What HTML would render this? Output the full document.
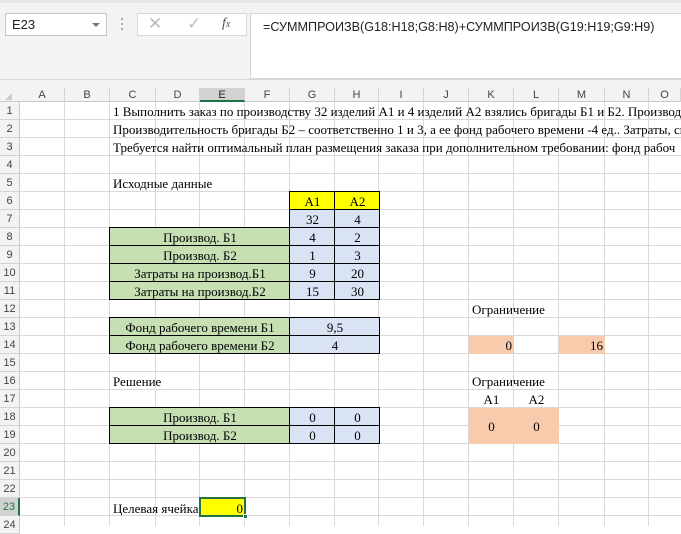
<!DOCTYPE html>
<html><head><meta charset="utf-8"><style>
*{margin:0;padding:0;box-sizing:border-box}
body{width:681px;height:526px;overflow:hidden;background:#fff;position:relative;font-family:"Liberation Serif",serif;font-size:13px;color:#000}
.a{position:absolute}
.t{position:absolute;white-space:nowrap;line-height:20px;height:18px;overflow:visible}
.c{text-align:center}
.ch{position:absolute;top:88px;height:14px;font:11px "Liberation Sans",sans-serif;color:#444;text-align:center;line-height:14px;border-right:1px solid #d4d4d4}
.rh{position:absolute;left:0;width:20px;height:18px;font:11px "Liberation Sans",sans-serif;color:#444;text-align:center;line-height:18px;background:#f3f3f3;border-bottom:1px solid #d4d4d4;border-right:1px solid #c8c8c8}
.vl{position:absolute;top:102px;bottom:0;width:1px;background:#d9d9d9}
.hl{position:absolute;left:20px;right:0;height:1px;background:#d9d9d9}
.g{background:#c6e0b4}.b{background:#dae3f3}.y{background:#ffff00}.o{background:#f8cbad}
.bx{border:1px solid #000}
.wide{overflow:hidden}
</style></head><body>
<div class="a" style="left:0;top:0;width:681px;height:88px;background:#f3f3f3"></div>
<div class="a" style="left:0;top:0;width:681px;height:3px;background:#e6e6e6"></div>
<div class="a" style="left:5px;top:13px;width:102px;height:23px;background:#fff;border:1px solid #c6c6c6;font:13px 'Liberation Sans',sans-serif;line-height:21px;padding-left:6px;color:#222">E23</div>
<div class="a" style="left:92px;top:23px;width:0;height:0;border-left:4px solid transparent;border-right:4px solid transparent;border-top:4px solid #777"></div>
<div class="a" style="left:121px;top:18px;width:2px;height:2px;background:#aaa;box-shadow:0 5px #aaa,0 10px #aaa"></div>
<div class="a" style="left:137px;top:13px;width:110px;height:23px;background:#fff;border:1px solid #d6d6d6"></div>
<div class="a" style="left:148px;top:14px;font:17px 'Liberation Sans',sans-serif;color:#bbb">✕</div>
<div class="a" style="left:187px;top:14px;font:17px 'Liberation Sans',sans-serif;color:#bbb">✓</div>
<div class="a" style="left:222px;top:16px;font:italic 14px 'Liberation Serif',serif;color:#555">f<span style="font-size:10px">x</span></div>
<div class="a" style="left:250px;top:13px;width:431px;height:66px;background:#fff;border:1px solid #d6d6d6;border-right:none;font:12.6px 'Liberation Sans',sans-serif;padding:6px 0 0 12px;color:#222;white-space:nowrap;overflow:hidden">=СУММПРОИЗВ(G18:H18;G8:H8)+СУММПРОИЗВ(G19:H19;G9:H9)</div>
<div class="a" style="left:0;top:79px;width:681px;height:1px;background:#d6d6d6"></div>
<div class="a" style="left:0;top:88px;width:681px;height:14px;background:#f3f3f3;border-bottom:1px solid #c8c8c8"></div>
<div class="a" style="left:5px;top:93px;width:0;height:0;border-left:7px solid transparent;border-bottom:7px solid #ccc"></div>
<div class="ch" style="left:20px;width:45px">A</div><div class="ch" style="left:65px;width:45px">B</div><div class="ch" style="left:110px;width:46px">C</div><div class="ch" style="left:156px;width:44px">D</div><div class="ch" style="left:200px;width:45px;background:#d2d2d2;color:#222;border-bottom:2px solid #217346">E</div><div class="ch" style="left:245px;width:45px">F</div><div class="ch" style="left:290px;width:45px">G</div><div class="ch" style="left:335px;width:44px">H</div><div class="ch" style="left:379px;width:45px">I</div><div class="ch" style="left:424px;width:45px">J</div><div class="ch" style="left:469px;width:45px">K</div><div class="ch" style="left:514px;width:45px">L</div><div class="ch" style="left:559px;width:46px">M</div><div class="ch" style="left:605px;width:44px">N</div><div class="ch" style="left:649px;width:32px">O</div>
<div class="vl" style="left:64px"></div><div class="vl" style="left:109px"></div><div class="vl" style="left:155px"></div><div class="vl" style="left:199px"></div><div class="vl" style="left:244px"></div><div class="vl" style="left:289px"></div><div class="vl" style="left:334px"></div><div class="vl" style="left:378px"></div><div class="vl" style="left:423px"></div><div class="vl" style="left:468px"></div><div class="vl" style="left:513px"></div><div class="vl" style="left:558px"></div><div class="vl" style="left:604px"></div><div class="vl" style="left:648px"></div>
<div class="hl" style="top:119px"></div><div class="hl" style="top:137px"></div><div class="hl" style="top:155px"></div><div class="hl" style="top:173px"></div><div class="hl" style="top:191px"></div><div class="hl" style="top:209px"></div><div class="hl" style="top:227px"></div><div class="hl" style="top:245px"></div><div class="hl" style="top:263px"></div><div class="hl" style="top:281px"></div><div class="hl" style="top:299px"></div><div class="hl" style="top:317px"></div><div class="hl" style="top:335px"></div><div class="hl" style="top:353px"></div><div class="hl" style="top:371px"></div><div class="hl" style="top:389px"></div><div class="hl" style="top:407px"></div><div class="hl" style="top:425px"></div><div class="hl" style="top:443px"></div><div class="hl" style="top:461px"></div><div class="hl" style="top:479px"></div><div class="hl" style="top:497px"></div><div class="hl" style="top:515px"></div>
<div class="rh" style="top:102px">1</div><div class="rh" style="top:120px">2</div><div class="rh" style="top:138px">3</div><div class="rh" style="top:156px">4</div><div class="rh" style="top:174px">5</div><div class="rh" style="top:192px">6</div><div class="rh" style="top:210px">7</div><div class="rh" style="top:228px">8</div><div class="rh" style="top:246px">9</div><div class="rh" style="top:264px">10</div><div class="rh" style="top:282px">11</div><div class="rh" style="top:300px">12</div><div class="rh" style="top:318px">13</div><div class="rh" style="top:336px">14</div><div class="rh" style="top:354px">15</div><div class="rh" style="top:372px">16</div><div class="rh" style="top:390px">17</div><div class="rh" style="top:408px">18</div><div class="rh" style="top:426px">19</div><div class="rh" style="top:444px">20</div><div class="rh" style="top:462px">21</div><div class="rh" style="top:480px">22</div><div class="rh" style="top:498px;background:#d2d2d2;color:#217346;border-right:2px solid #217346">23</div><div class="rh" style="top:516px">24</div>

<div class="t wide" style="left:113px;top:102px;width:568px">1 Выполнить заказ по производству 32 изделий А1 и 4 изделий А2 взялись бригады Б1 и Б2. Производи</div>
<div class="t wide" style="left:113px;top:120px;width:568px">Производительность бригады Б2 – соответственно 1 и 3, а ее фонд рабочего времени -4 ед.. Затраты, св</div>
<div class="t wide" style="left:113px;top:138px;width:568px">Требуется найти оптимальный план размещения заказа при дополнительном требовании: фонд рабоч</div>
<div class="t" style="left:113px;top:174px">Исходные данные</div>

<div class="a y bx" style="left:289px;top:191px;width:46px;height:19px"></div><div class="a y bx" style="left:334px;top:191px;width:46px;height:19px"></div>
<div class="t c" style="left:290px;top:192px;width:45px">А1</div><div class="t c" style="left:335px;top:192px;width:45px">А2</div>
<div class="a b bx" style="left:289px;top:209px;width:46px;height:19px"></div><div class="a b bx" style="left:334px;top:209px;width:46px;height:19px"></div>
<div class="t c" style="left:290px;top:210px;width:45px">32</div><div class="t c" style="left:335px;top:210px;width:45px">4</div>

<div class="a g bx" style="left:109px;top:227px;width:181px;height:19px"></div><div class="a b bx" style="left:289px;top:227px;width:46px;height:19px"></div><div class="a b bx" style="left:334px;top:227px;width:46px;height:19px"></div>
<div class="a g bx" style="left:109px;top:245px;width:181px;height:19px"></div><div class="a b bx" style="left:289px;top:245px;width:46px;height:19px"></div><div class="a b bx" style="left:334px;top:245px;width:46px;height:19px"></div>
<div class="a g bx" style="left:109px;top:263px;width:181px;height:19px"></div><div class="a b bx" style="left:289px;top:263px;width:46px;height:19px"></div><div class="a b bx" style="left:334px;top:263px;width:46px;height:19px"></div>
<div class="a g bx" style="left:109px;top:281px;width:181px;height:19px"></div><div class="a b bx" style="left:289px;top:281px;width:46px;height:19px"></div><div class="a b bx" style="left:334px;top:281px;width:46px;height:19px"></div>
<div class="t c" style="left:110px;top:228px;width:180px">Производ. Б1</div><div class="t c" style="left:290px;top:228px;width:45px">4</div><div class="t c" style="left:335px;top:228px;width:45px">2</div>
<div class="t c" style="left:110px;top:246px;width:180px">Производ. Б2</div><div class="t c" style="left:290px;top:246px;width:45px">1</div><div class="t c" style="left:335px;top:246px;width:45px">3</div>
<div class="t c" style="left:110px;top:264px;width:180px">Затраты на производ.Б1</div><div class="t c" style="left:290px;top:264px;width:45px">9</div><div class="t c" style="left:335px;top:264px;width:45px">20</div>
<div class="t c" style="left:110px;top:282px;width:180px">Затраты на производ.Б2</div><div class="t c" style="left:290px;top:282px;width:45px">15</div><div class="t c" style="left:335px;top:282px;width:45px">30</div>

<div class="a g bx" style="left:109px;top:317px;width:181px;height:19px"></div><div class="a b bx" style="left:289px;top:317px;width:91px;height:19px"></div>
<div class="a g bx" style="left:109px;top:335px;width:181px;height:19px"></div><div class="a b bx" style="left:289px;top:335px;width:91px;height:19px"></div>
<div class="t c" style="left:110px;top:318px;width:180px">Фонд рабочего времени Б1</div><div class="t c" style="left:290px;top:318px;width:90px">9,5</div>
<div class="t c" style="left:110px;top:336px;width:180px">Фонд рабочего времени Б2</div><div class="t c" style="left:290px;top:336px;width:90px">4</div>

<div class="t" style="left:472px;top:300px">Ограничение</div>
<div class="a o" style="left:469px;top:336px;width:45px;height:18px"></div><div class="t" style="left:469px;top:336px;width:43px;text-align:right">0</div>
<div class="a o" style="left:559px;top:336px;width:46px;height:18px"></div><div class="t" style="left:559px;top:336px;width:44px;text-align:right">16</div>

<div class="t" style="left:113px;top:372px">Решение</div>
<div class="t" style="left:472px;top:372px">Ограничение</div>
<div class="t c" style="left:469px;top:390px;width:45px">А1</div><div class="t c" style="left:514px;top:390px;width:45px">А2</div>
<div class="a o" style="left:469px;top:408px;width:90px;height:36px"></div>
<div class="t c" style="left:469px;top:417px;width:45px">0</div><div class="t c" style="left:514px;top:417px;width:45px">0</div>

<div class="a g bx" style="left:109px;top:407px;width:181px;height:19px"></div><div class="a b bx" style="left:289px;top:407px;width:46px;height:19px"></div><div class="a b bx" style="left:334px;top:407px;width:46px;height:19px"></div>
<div class="a g bx" style="left:109px;top:425px;width:181px;height:19px"></div><div class="a b bx" style="left:289px;top:425px;width:46px;height:19px"></div><div class="a b bx" style="left:334px;top:425px;width:46px;height:19px"></div>
<div class="t c" style="left:110px;top:408px;width:180px">Производ. Б1</div><div class="t c" style="left:290px;top:408px;width:45px">0</div><div class="t c" style="left:335px;top:408px;width:45px">0</div>
<div class="t c" style="left:110px;top:426px;width:180px">Производ. Б2</div><div class="t c" style="left:290px;top:426px;width:45px">0</div><div class="t c" style="left:335px;top:426px;width:45px">0</div>

<div class="t" style="left:113px;top:499px">Целевая ячейка</div>
<div class="a y" style="left:199px;top:497px;width:47px;height:20px;border:2px solid #217346"></div>
<div class="t" style="left:200px;top:499px;width:43px;text-align:right">0</div>
<div class="a" style="left:243px;top:514px;width:5px;height:5px;background:#217346;border:1px solid #fff"></div>
</body></html>
